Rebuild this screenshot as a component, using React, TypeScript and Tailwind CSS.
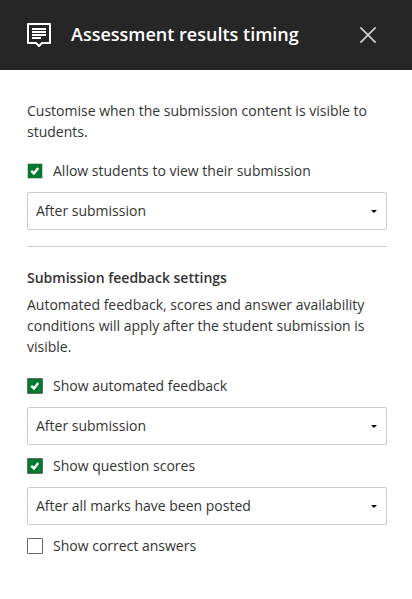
import { useId, useState } from 'react'

interface TimingOptionProps {
  label: string
  defaultChecked?: boolean
  timing?: string
  borderClass?: string
}

const TIMINGS = ['After submission', 'After individual marks have been posted', 'After due date', 'After all marks have been posted']

function TimingOption({ label, defaultChecked = false, timing, borderClass = 'border-[#666666]' }: TimingOptionProps) {
  const id = useId()
  const [checked, setChecked] = useState(defaultChecked)

  return (
    <div>
      <div className="flex h-[42px] items-center">
        <span className="relative flex size-4 shrink-0">
          <input
            id={id}
            type="checkbox"
            checked={checked}
            onChange={e => setChecked(e.target.checked)}
            className={`size-4 appearance-none rounded-[1px] border bg-white checked:bg-[#007a2f] ${borderClass}`}
          />
          {checked && (
            <svg viewBox="0 0 16 16" className="pointer-events-none absolute inset-0 size-4" aria-hidden="true">
              <path d="M4.2 7.9 6.9 10.4 11.2 4.9" fill="none" stroke="#fff" strokeWidth="2.4" />
            </svg>
          )}
        </span>
        <label htmlFor={id} className="pb-0.5 pl-[10px]">{label}</label>
      </div>

      {timing && (
        <div className="relative">
          <select
            aria-label={`${label} timing`}
            defaultValue={timing}
            className="block h-[38px] w-full appearance-none rounded-[2px] border border-[#cccccc] bg-white pr-8 pb-0.5 pl-2"
          >
            {TIMINGS.map(t => (
              <option key={t}>{t}</option>
            ))}
          </select>
          <svg viewBox="0 0 6 3" className="pointer-events-none absolute top-[18px] right-[10px] h-[3px] w-[6px]" aria-hidden="true">
            <path d="M0 0h6L3 3z" fill="#000" />
          </svg>
        </div>
      )}
    </div>
  )
}

export default function App() {
  return (
    <div className="min-h-screen bg-white font-['Open_Sans','Noto_Sans',sans-serif] text-sm leading-[21px] text-[#333333]">
      <header className="flex h-[70px] items-center bg-[#262626] pr-8 pl-[27px] text-white">
        <svg viewBox="0 0 24 24" className="size-6 shrink-0" fill="none" stroke="currentColor" strokeWidth="2" strokeLinejoin="round" aria-hidden="true">
          <path d="M1 1h22v19h-8l-3 3-3-3H1z" />
          <path d="M5 6h14M5 9h14M5 12h14M5 15h9" />
        </svg>
        <h1 className="flex-1 pb-0.5 pl-5 text-lg font-semibold">Assessment results timing</h1>
        <button type="button" aria-label="Close" className="flex size-6 items-center justify-center text-[#cccccc]">
          <svg viewBox="0 0 16 16" className="size-4" fill="none" stroke="currentColor" strokeWidth="1.8" aria-hidden="true">
            <path d="M.4.4l15.2 15.2M15.6.4.4 15.6" />
          </svg>
        </button>
      </header>

      <main className="pt-[30px] pr-[25px] pb-8 pl-[27px]">
        <p className="mb-2">Customise when the submission content is visible to students.</p>
        <TimingOption label="Allow students to view their submission" defaultChecked timing="After submission" borderClass="border-[#cccccc]" />

        <hr className="mt-4 mb-5 border-[#cccccc]" />

        <h2 className="mb-[6px] font-semibold">Submission feedback settings</h2>
        <p className="mb-2">
          Automated feedback, scores and answer availability conditions will apply after the student submission is visible.
        </p>
        <TimingOption label="Show automated feedback" defaultChecked timing="After submission" />
        <TimingOption label="Show question scores" defaultChecked timing="After all marks have been posted" />
        <TimingOption label="Show correct answers" />
      </main>
    </div>
  )
}
